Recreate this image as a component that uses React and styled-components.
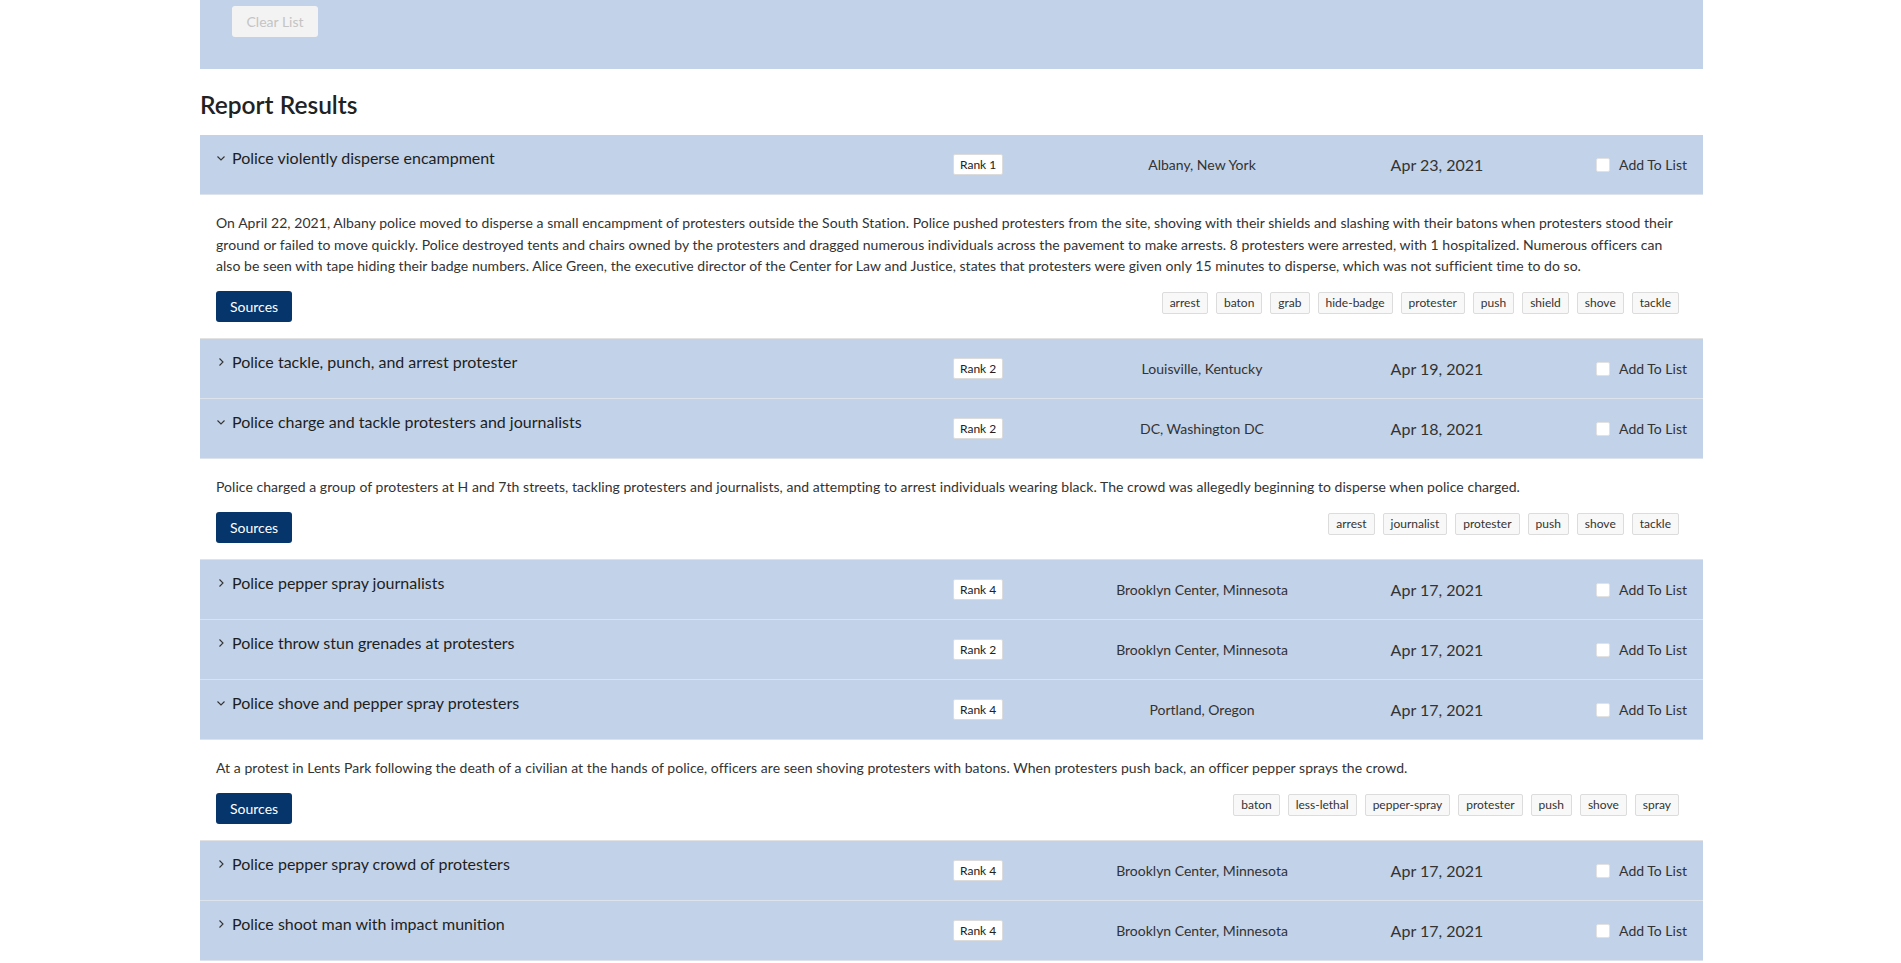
import React, { useState } from "react";
import styled, { createGlobalStyle } from "styled-components";

const GlobalStyle = createGlobalStyle`
  body {
    margin: 0;
    background: #ffffff;
    font-family: Lato, "Open Sans", Arial, sans-serif;
    color: #222;
  }
`;

const Page = styled.div`
  width: 1503px;
  margin: 0 0 0 200px;
`;

const TopPanel = styled.div`
  background: #c2d2e8;
  height: 69px;
  padding: 6px 32px 0;
  box-sizing: border-box;
`;

const ClearButton = styled.button`
  width: 86px;
  height: 31px;
  border: none;
  border-radius: 3px;
  background: #f3f3f3;
  color: #c4c4c4;
  font-family: inherit;
  font-size: 14px;
  cursor: default;
`;

const Heading = styled.h2`
  font-size: 24.5px;
  font-weight: 600;
  color: #222;
  margin: 21px 0 16px;
  line-height: 29px;
`;

const RowHeader = styled.div`
  display: grid;
  grid-template-columns: 751px 126px 250px 220px 1fr;
  align-items: center;
  height: 59px;
  background: #c2d2e8;
  border-bottom: 1px solid #dde3ec;
`;

const TitleCell = styled.div`
  align-self: start;
  display: flex;
  align-items: center;
  padding: 11px 0 0 16px;
  font-size: 16px;
  line-height: 24px;
  color: #1e1e1e;
  cursor: pointer;
`;

const Chevron = styled.svg`
  width: 10px;
  height: 10px;
  margin-right: 6px;
  flex-shrink: 0;
`;

const RankBadge = styled.span`
  justify-self: start;
  margin-left: 2px;
  background: #fff;
  border: 1px solid #dcdcdc;
  border-radius: 2px;
  font-size: 12px;
  line-height: 17px;
  padding: 1px 6px;
  color: #222;
`;

const Location = styled.div`
  text-align: center;
  font-size: 14px;
  color: #333;
`;

const DateCell = styled.div`
  text-align: center;
  font-size: 16px;
  color: #333;
`;

const AddCell = styled.label`
  justify-self: end;
  display: flex;
  align-items: center;
  gap: 9px;
  padding-right: 16px;
  font-size: 14px;
  color: #333;
`;

const Check = styled.input`
  appearance: none;
  width: 14px;
  height: 14px;
  margin: 0;
  background: #fff;
  border: 1px solid #e2e2e2;
  border-radius: 2px;
`;

const Body = styled.div`
  padding: 17px 16px 16.5px;
  border-bottom: 1px solid #e2e2e2;
`;

const Description = styled.p`
  margin: 0 0 14px;
  font-size: 14px;
  line-height: 21.5px;
  letter-spacing: 0.045px;
  color: #333;
`;

const BodyFooter = styled.div`
  display: flex;
  align-items: flex-start;
  justify-content: space-between;
`;

const SourcesButton = styled.button`
  height: 31px;
  padding: 0 14px;
  border: none;
  border-radius: 3px;
  background: #05356a;
  color: #fff;
  font-family: inherit;
  font-size: 14px;
`;

const Tags = styled.div`
  display: flex;
  gap: 8px;
  margin: 1px 8px 0 0;
`;

const Tag = styled.span`
  background: #f8f8f8;
  border: 1px solid #dcdcdc;
  border-radius: 2px;
  font-size: 12px;
  line-height: 18px;
  padding: 1px 7px;
  color: #333;
`;

const reports = [
  {
    title: "Police violently disperse encampment",
    rank: 1,
    location: "Albany, New York",
    date: "Apr 23, 2021",
    open: true,
    text: "On April 22, 2021, Albany police moved to disperse a small encampment of protesters outside the South Station. Police pushed protesters from the site, shoving with their shields and slashing with their batons when protesters stood their ground or failed to move quickly. Police destroyed tents and chairs owned by the protesters and dragged numerous individuals across the pavement to make arrests. 8 protesters were arrested, with 1 hospitalized. Numerous officers can also be seen with tape hiding their badge numbers. Alice Green, the executive director of the Center for Law and Justice, states that protesters were given only 15 minutes to disperse, which was not sufficient time to do so.",
    tags: ["arrest", "baton", "grab", "hide-badge", "protester", "push", "shield", "shove", "tackle"],
  },
  {
    title: "Police tackle, punch, and arrest protester",
    rank: 2,
    location: "Louisville, Kentucky",
    date: "Apr 19, 2021",
  },
  {
    title: "Police charge and tackle protesters and journalists",
    rank: 2,
    location: "DC, Washington DC",
    date: "Apr 18, 2021",
    open: true,
    text: "Police charged a group of protesters at H and 7th streets, tackling protesters and journalists, and attempting to arrest individuals wearing black. The crowd was allegedly beginning to disperse when police charged.",
    tags: ["arrest", "journalist", "protester", "push", "shove", "tackle"],
  },
  {
    title: "Police pepper spray journalists",
    rank: 4,
    location: "Brooklyn Center, Minnesota",
    date: "Apr 17, 2021",
  },
  {
    title: "Police throw stun grenades at protesters",
    rank: 2,
    location: "Brooklyn Center, Minnesota",
    date: "Apr 17, 2021",
  },
  {
    title: "Police shove and pepper spray protesters",
    rank: 4,
    location: "Portland, Oregon",
    date: "Apr 17, 2021",
    open: true,
    text: "At a protest in Lents Park following the death of a civilian at the hands of police, officers are seen shoving protesters with batons. When protesters push back, an officer pepper sprays the crowd.",
    tags: ["baton", "less-lethal", "pepper-spray", "protester", "push", "shove", "spray"],
  },
  {
    title: "Police pepper spray crowd of protesters",
    rank: 4,
    location: "Brooklyn Center, Minnesota",
    date: "Apr 17, 2021",
  },
  {
    title: "Police shoot man with impact munition",
    rank: 4,
    location: "Brooklyn Center, Minnesota",
    date: "Apr 17, 2021",
  },
];

const ChevronIcon = ({ open }) => (
  <Chevron viewBox="0 0 10 10">
    {open ? (
      <polyline points="1.5,3.5 5,7 8.5,3.5" fill="none" stroke="#333" strokeWidth="1.1" />
    ) : (
      <polyline points="3.5,1.5 7,5 3.5,8.5" fill="none" stroke="#333" strokeWidth="1.1" />
    )}
  </Chevron>
);

const ReportItem = ({ report }) => {
  const [open, setOpen] = useState(!!report.open);
  return (
    <div>
      <RowHeader>
        <TitleCell onClick={() => setOpen(!open)}>
          <ChevronIcon open={open} />
          {report.title}
        </TitleCell>
        <RankBadge>Rank {report.rank}</RankBadge>
        <Location>{report.location}</Location>
        <DateCell>{report.date}</DateCell>
        <AddCell>
          <Check type="checkbox" />
          Add To List
        </AddCell>
      </RowHeader>
      {open && report.text && (
        <Body>
          <Description>{report.text}</Description>
          <BodyFooter>
            <SourcesButton>Sources</SourcesButton>
            <Tags>
              {report.tags.map((t) => (
                <Tag key={t}>{t}</Tag>
              ))}
            </Tags>
          </BodyFooter>
        </Body>
      )}
    </div>
  );
};

const App = () => (
  <Page>
    <GlobalStyle />
    <TopPanel>
      <ClearButton disabled>Clear List</ClearButton>
    </TopPanel>
    <Heading>Report Results</Heading>
    {reports.map((r) => (
      <ReportItem key={r.title} report={r} />
    ))}
  </Page>
);

export default App;
